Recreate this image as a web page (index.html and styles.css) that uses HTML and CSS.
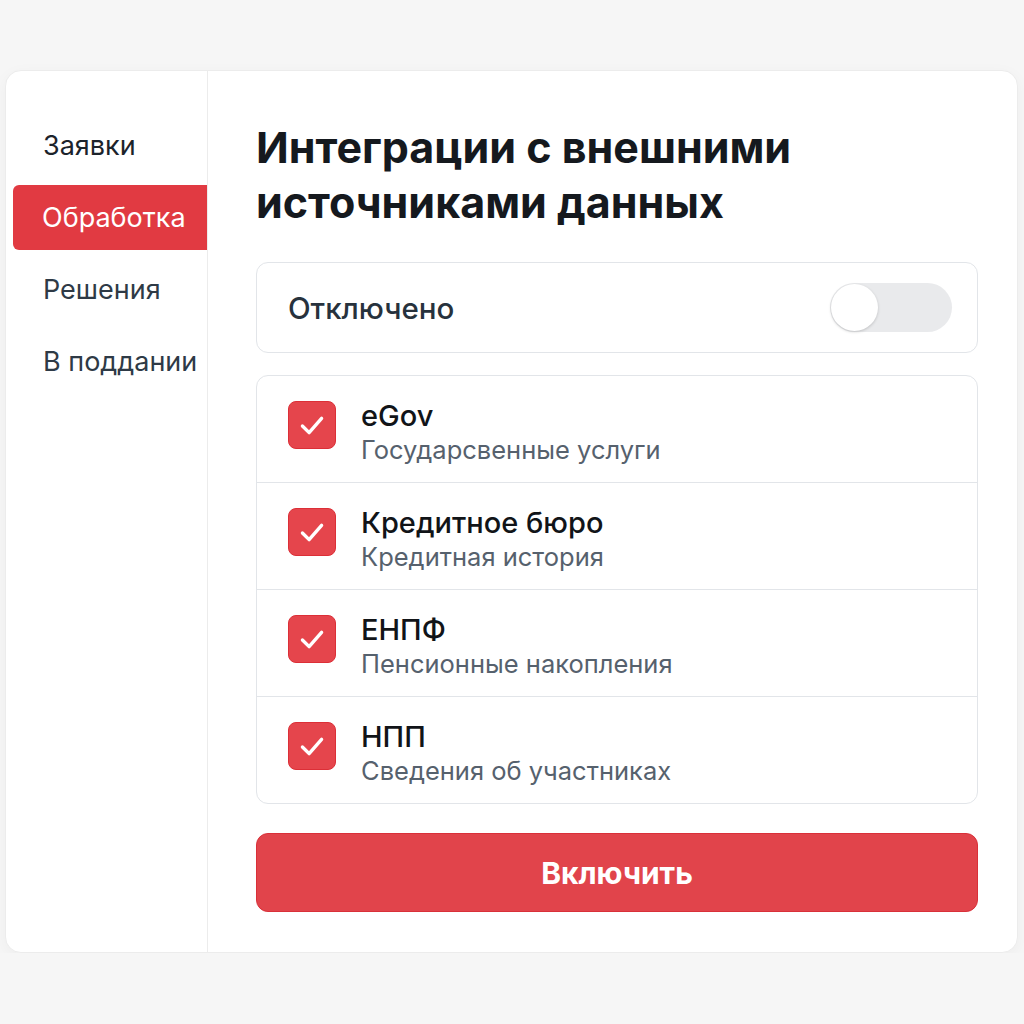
FILE: index.html
```html
<!DOCTYPE html>
<html>

<head>
	<meta charset='utf-8'>
	<title>Интеграции</title>
	<link rel="stylesheet" href="styles.css">
</head>

<body>
	<div class="card">
		<nav class="sidebar">
			<div class="nav_item">Заявки</div>
			<div class="nav_item nav_active">Обработка</div>
			<div class="nav_item">Решения</div>
			<div class="nav_item">В поддании</div>
		</nav>

		<main class="content">
			<h1 class="title">Интеграции с внешними источниками данных</h1>

			<div class="status_box">
				<span class="status_label">Отключено</span>
				<span class="toggle"><span class="toggle_knob"></span></span>
			</div>

			<div class="sources">
				<div class="source">
					<span class="check"><svg viewBox="0 0 48 48" width="48" height="48"><polyline points="14,25 21,32 34,17" /></svg></span>
					<div class="source_text">
						<div class="source_name">eGov</div>
						<div class="source_desc">Государсвенные услуги</div>
					</div>
				</div>
				<div class="source">
					<span class="check"><svg viewBox="0 0 48 48" width="48" height="48"><polyline points="14,25 21,32 34,17" /></svg></span>
					<div class="source_text">
						<div class="source_name">Кредитное бюро</div>
						<div class="source_desc">Кредитная история</div>
					</div>
				</div>
				<div class="source">
					<span class="check"><svg viewBox="0 0 48 48" width="48" height="48"><polyline points="14,25 21,32 34,17" /></svg></span>
					<div class="source_text">
						<div class="source_name">ЕНПФ</div>
						<div class="source_desc">Пенсионные накопления</div>
					</div>
				</div>
				<div class="source">
					<span class="check"><svg viewBox="0 0 48 48" width="48" height="48"><polyline points="14,25 21,32 34,17" /></svg></span>
					<div class="source_text">
						<div class="source_name">НПП</div>
						<div class="source_desc">Сведения об участниках</div>
					</div>
				</div>
			</div>

			<button class="enable_button">Включить</button>
		</main>
	</div>
</body>

</html>
```
FILE: styles.css
```css
body {
	margin: 0;
	background: #f6f6f6;
	font-family: Inter, "Noto Sans", sans-serif;
	color: #1c232b;
}
.card {
	display: flex;
	margin: 70px 6px 0 5px;
	height: 883px;
	background: #fff;
	border: 1px solid #ececec;
	border-radius: 16px;
	box-shadow: 0 4px 16px rgba(0, 0, 0, 0.04);
	box-sizing: border-box;
	overflow: hidden;
}
.sidebar {
	width: 202px;
	flex: none;
	padding: 42px 0 0 7px;
	box-sizing: border-box;
	border-right: 1px solid #ececec;
}
.nav_item {
	height: 65px;
	margin-bottom: 7px;
	padding-left: 30px;
	display: flex;
	align-items: center;
	font-size: 27px;
	color: #2e3a46;
	border-radius: 6px 0 0 6px;
}
.nav_item:first-child {
	color: #1c232b;
}
.nav_active {
	background: #e13a42;
	color: #fff;
	padding-left: 29px;
}
.content {
	flex: 1;
	padding: 49px 39px 0 48px;
}
.title {
	margin: 0 0 32px;
	font-size: 43px;
	line-height: 55px;
	font-weight: 700;
	color: #15191e;
	width: 600px;
}
.status_box {
	height: 91px;
	box-sizing: border-box;
	border: 1px solid #e2e5e9;
	border-radius: 12px;
	display: flex;
	align-items: center;
	justify-content: space-between;
	padding: 0 25px 0 31px;
}
.status_label {
	font-size: 29.5px;
	font-weight: 500;
	color: #27323d;
}
.toggle {
	width: 122px;
	height: 49px;
	border-radius: 25px;
	background: #e9eaec;
	display: flex;
	align-items: center;
	padding: 0 1px;
	box-sizing: border-box;
}
.toggle_knob {
	width: 47px;
	height: 47px;
	border-radius: 50%;
	background: #fff;
	box-shadow: 0 1px 3px rgba(0, 0, 0, 0.18);
}
.sources {
	margin-top: 22px;
	border: 1px solid #e2e5e9;
	border-radius: 12px;
}
.source {
	height: 106px;
	display: flex;
	align-items: center;
	padding: 0 31px;
	gap: 25px;
	border-bottom: 1px solid #e2e5e9;
}
.source:last-child {
	border-bottom: none;
}
.check {
	width: 48px;
	height: 48px;
	border-radius: 8px;
	background: #e5454c;
	border: 1px solid #dc2f37;
	box-sizing: border-box;
	margin-top: -8px;
	display: flex;
	align-items: center;
	justify-content: center;
}
.check polyline {
	fill: none;
	stroke: #fff;
	stroke-width: 3.5;
	stroke-linecap: round;
	stroke-linejoin: round;
}
.source_text {
	padding-top: 6px;
}
.source_name {
	font-size: 29px;
	line-height: 34px;
	font-weight: 500;
	color: #111418;
}
.source_desc {
	font-size: 25.5px;
	line-height: 33px;
	color: #56616d;
}
.enable_button {
	display: block;
	width: 100%;
	height: 79px;
	margin-top: 29px;
	border: 1px solid #d93039;
	border-radius: 12px;
	background: #e1444b;
	color: #fff;
	font-family: Inter, "Noto Sans", sans-serif;
	font-size: 30px;
	font-weight: 700;
}
```
